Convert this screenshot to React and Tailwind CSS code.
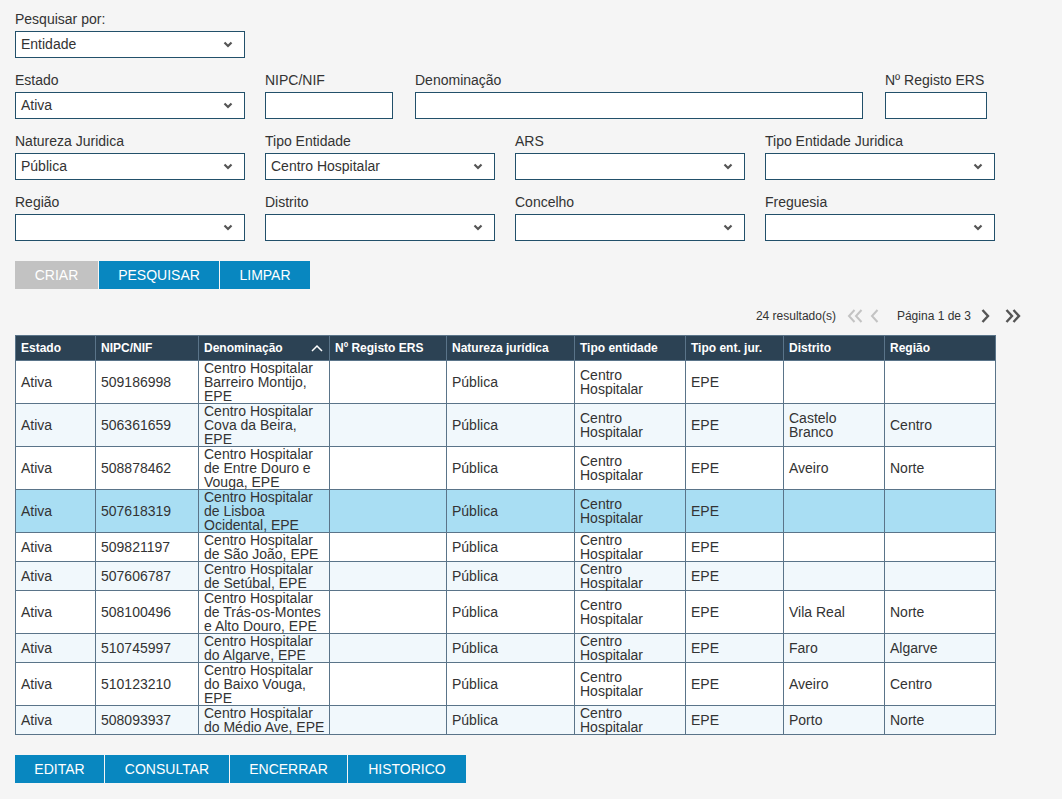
import React from "react";

const rows = [
  ["Ativa", "509186998", "Centro Hospitalar Barreiro Montijo, EPE", "", "Pública", "Centro Hospitalar", "EPE", "", ""],
  ["Ativa", "506361659", "Centro Hospitalar Cova da Beira, EPE", "", "Pública", "Centro Hospitalar", "EPE", "Castelo Branco", "Centro"],
  ["Ativa", "508878462", "Centro Hospitalar de Entre Douro e Vouga, EPE", "", "Pública", "Centro Hospitalar", "EPE", "Aveiro", "Norte"],
  ["Ativa", "507618319", "Centro Hospitalar de Lisboa Ocidental, EPE", "", "Pública", "Centro Hospitalar", "EPE", "", ""],
  ["Ativa", "509821197", "Centro Hospitalar de São João, EPE", "", "Pública", "Centro Hospitalar", "EPE", "", ""],
  ["Ativa", "507606787", "Centro Hospitalar de Setúbal, EPE", "", "Pública", "Centro Hospitalar", "EPE", "", ""],
  ["Ativa", "508100496", "Centro Hospitalar de Trás-os-Montes e Alto Douro, EPE", "", "Pública", "Centro Hospitalar", "EPE", "Vila Real", "Norte"],
  ["Ativa", "510745997", "Centro Hospitalar do Algarve, EPE", "", "Pública", "Centro Hospitalar", "EPE", "Faro", "Algarve"],
  ["Ativa", "510123210", "Centro Hospitalar do Baixo Vouga, EPE", "", "Pública", "Centro Hospitalar", "EPE", "Aveiro", "Centro"],
  ["Ativa", "508093937", "Centro Hospitalar do Médio Ave, EPE", "", "Pública", "Centro Hospitalar", "EPE", "Porto", "Norte"],
];

const columns = [
  { label: "Estado", w: 80 },
  { label: "NIPC/NIF", w: 103 },
  { label: "Denominação", w: 131, sort: true },
  { label: "Nº Registo ERS", w: 117 },
  { label: "Natureza jurídica", w: 128 },
  { label: "Tipo entidade", w: 111 },
  { label: "Tipo ent. jur.", w: 98 },
  { label: "Distrito", w: 101 },
  { label: "Região", w: 111 },
];

const Chevron = () => (
  <svg width="10" height="7" viewBox="0 0 10 7" fill="none">
    <path d="M1.5 1.5L5 5L8.5 1.5" stroke="#555" strokeWidth="2.2" />
  </svg>
);

const Select = ({ value = "", width = "w-[230px]" }) => (
  <div className={`flex h-[27px] ${width} items-center justify-between border border-[#22506a] bg-white pl-[5px] pr-[11px]`}>
    <span>{value}</span>
    <Chevron />
  </div>
);

const Input = ({ width }) => (
  <div className={`h-[27px] ${width} border border-[#22506a] bg-white`} />
);

const Field = ({ label, children, className = "" }) => (
  <div className={className}>
    <div className="mb-[4px] h-4 leading-4">{label}</div>
    {children}
  </div>
);

const Pager = () => (
  <div className="flex h-[46px] w-[1007px] items-center justify-end pt-[7px] text-[12px]">
    <span className="mr-[10px]">24 resultado(s)</span>
    <svg width="18" height="16" viewBox="0 0 18 16" fill="none" className="mr-[6px]">
      <path d="M8.5 2L3 8L8.5 14M15.5 2L10 8L15.5 14" stroke="#c3c3c3" strokeWidth="2" />
    </svg>
    <svg width="10" height="16" viewBox="0 0 10 16" fill="none" className="mr-[17px]">
      <path d="M7.5 2L2 8L7.5 14" stroke="#c3c3c3" strokeWidth="2" />
    </svg>
    <span className="mr-[9px]">Página 1 de 3</span>
    <svg width="10" height="16" viewBox="0 0 10 16" fill="none" className="mr-[14px]">
      <path d="M2.5 2L8 8L2.5 14" stroke="#555" strokeWidth="2.4" />
    </svg>
    <svg width="18" height="16" viewBox="0 0 18 16" fill="none">
      <path d="M2.5 2L8 8L2.5 14M9.5 2L15 8L9.5 14" stroke="#555" strokeWidth="2.4" />
    </svg>
  </div>
);

const Btn = ({ children, w, gray }) => (
  <div className={`flex h-[28px] ${w} items-center justify-center text-white ${gray ? "bg-[#c2c2c2]" : "bg-[#0887c0]"}`}>
    {children}
  </div>
);

export default function App() {
  return (
    <div className="min-h-screen bg-[#f5f5f5] pl-[15px] pt-[11px] font-['Liberation_Sans',Arial,sans-serif] text-[14px] text-[#333]">
      <Field label="Pesquisar por:">
        <Select value="Entidade" />
      </Field>

      <div className="mt-[14px] flex">
        <Field label="Estado">
          <Select value="Ativa" />
        </Field>
        <Field label="NIPC/NIF" className="ml-[20px]">
          <Input width="w-[128px]" />
        </Field>
        <Field label="Denominação" className="ml-[22px]">
          <Input width="w-[448px]" />
        </Field>
        <Field label="Nº Registo ERS" className="ml-[22px]">
          <Input width="w-[102px]" />
        </Field>
      </div>

      <div className="mt-[14px] flex gap-[20px]">
        <Field label="Natureza Juridica">
          <Select value="Pública" />
        </Field>
        <Field label="Tipo Entidade">
          <Select value="Centro Hospitalar" />
        </Field>
        <Field label="ARS">
          <Select />
        </Field>
        <Field label="Tipo Entidade Juridica">
          <Select />
        </Field>
      </div>

      <div className="mt-[14px] flex gap-[20px]">
        <Field label="Região">
          <Select />
        </Field>
        <Field label="Distrito">
          <Select />
        </Field>
        <Field label="Concelho">
          <Select />
        </Field>
        <Field label="Freguesia">
          <Select />
        </Field>
      </div>

      <div className="mt-[20px] flex gap-px">
        <Btn w="w-[83px]" gray>CRIAR</Btn>
        <Btn w="w-[120px]">PESQUISAR</Btn>
        <Btn w="w-[90px]">LIMPAR</Btn>
      </div>

      <Pager />

      <table className="w-[980px] table-fixed border-collapse border border-[#5a7489] leading-[14px]">
        <colgroup>
          {columns.map((c) => (
            <col key={c.label} style={{ width: c.w }} />
          ))}
        </colgroup>
        <thead>
          <tr className="h-[25px] bg-[#2c4254] text-[12px] font-bold text-white">
            {columns.map((c) => (
              <th key={c.label} className="border border-[#5a7489] pl-[5px] text-left align-middle">
                {c.sort ? (
                  <div className="flex items-center justify-between pr-[6px]">
                    <span>{c.label}</span>
                    <svg width="12" height="8" viewBox="0 0 12 8" fill="none">
                      <path d="M1 7L6 2L11 7" stroke="#fff" strokeWidth="1.5" />
                    </svg>
                  </div>
                ) : (
                  c.label
                )}
              </th>
            ))}
          </tr>
        </thead>
        <tbody>
          {rows.map((r, i) => (
            <tr
              key={r[1]}
              className={i === 3 ? "bg-[#a9def3]" : i % 2 === 1 ? "bg-[#f1f8fc]" : "bg-white"}
            >
              {r.map((cell, j) => (
                <td
                  key={j}
                  className={`border border-[#5a7489] p-0 pl-[5px] align-middle ${j === 2 ? "pr-[3px]" : "pr-[2px]"}`}
                >
                  {cell}
                </td>
              ))}
            </tr>
          ))}
        </tbody>
      </table>

      <div className="mt-[20px] flex gap-px pb-[17px]">
        <Btn w="w-[89px]">EDITAR</Btn>
        <Btn w="w-[124px]">CONSULTAR</Btn>
        <Btn w="w-[117px]">ENCERRAR</Btn>
        <Btn w="w-[118px]">HISTORICO</Btn>
      </div>
    </div>
  );
}
